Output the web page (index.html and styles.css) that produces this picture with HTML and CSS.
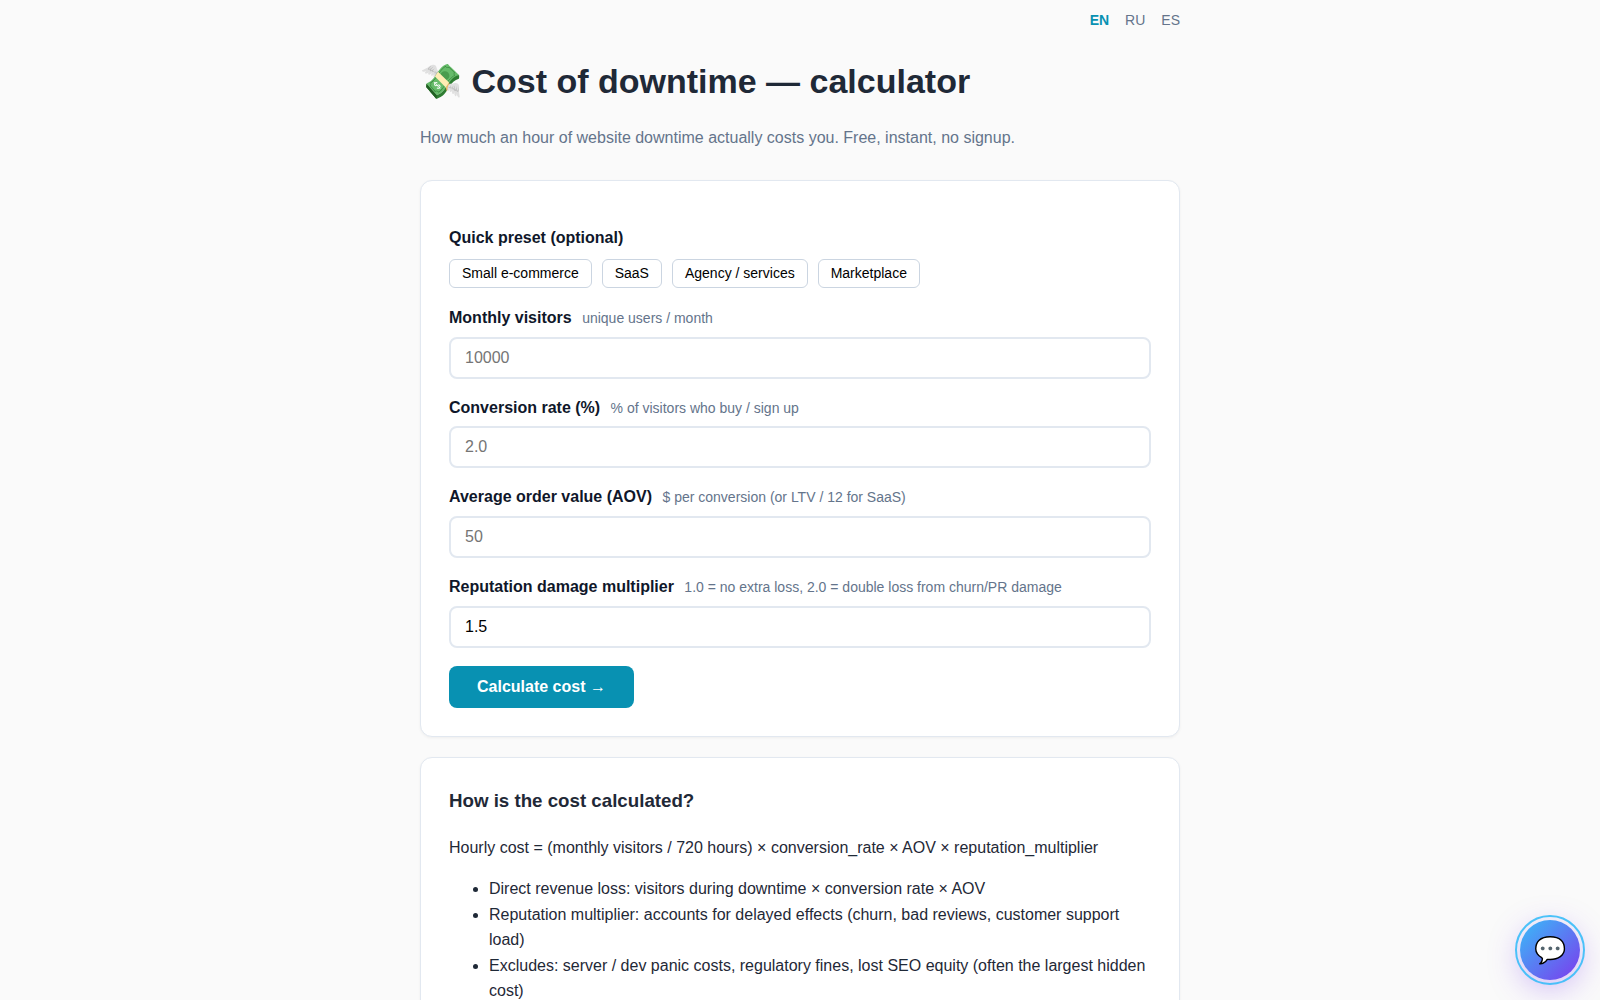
FILE: index.html
```
<!DOCTYPE html>
<html lang="en">
<head>
    <meta charset="UTF-8">
    <meta name="viewport" content="width=device-width, initial-scale=1.0">
    <title>Cost of downtime — calculator</title>
    <link rel="stylesheet" href="styles.css">
</head>
<body>
    <nav class="langs">
        <a href="#en" class="active">EN</a>
        <a href="#ru">RU</a>
        <a href="#es">ES</a>
    </nav>
    <h1>💸 Cost of downtime — calculator</h1>
    <p class="sub">How much an hour of website downtime actually costs you. Free, instant, no signup.</p>

    <form class="card">
        <div class="label" id="preset-label">Quick preset (optional)</div>
        <div class="presets" role="group" aria-labelledby="preset-label">
            <button type="button">Small e-commerce</button>
            <button type="button">SaaS</button>
            <button type="button">Agency / services</button>
            <button type="button">Marketplace</button>
        </div>

        <label class="label" for="visitors">Monthly visitors <span class="hint">unique users / month</span></label>
        <input type="number" id="visitors" placeholder="10000">

        <label class="label" for="conversion">Conversion rate (%) <span class="hint">% of visitors who buy / sign up</span></label>
        <input type="number" id="conversion" placeholder="2.0" step="0.1">

        <label class="label" for="aov">Average order value (AOV) <span class="hint">$ per conversion (or LTV / 12 for SaaS)</span></label>
        <input type="number" id="aov" placeholder="50">

        <label class="label" for="multiplier">Reputation damage multiplier <span class="hint">1.0 = no extra loss, 2.0 = double loss from churn/PR damage</span></label>
        <input type="number" id="multiplier" value="1.5" step="0.1">

        <button type="submit" class="submit">Calculate cost →</button>
    </form>

    <section class="card">
        <h3>How is the cost calculated?</h3>
        <p>Hourly cost = (monthly visitors / 720 hours) × conversion_rate × AOV × reputation_multiplier</p>
        <ul>
            <li>Direct revenue loss: visitors during downtime × conversion rate × AOV</li>
            <li>Reputation multiplier: accounts for delayed effects (churn, bad reviews, customer support load)</li>
            <li>Excludes: server / dev panic costs, regulatory fines, lost SEO equity (often the largest hidden cost)</li>
        </ul>
    </section>

    <button type="button" class="chat" aria-label="Open chat">💬</button>
</body>
</html>
```
FILE: styles.css
```
* {
    box-sizing: border-box;
}
body {
    font-family: "Liberation Sans", Arial, sans-serif;
    max-width: 800px;
    margin: 0 auto;
    padding: 8px 20px 40px;
    background: #fafafa;
    color: #1f2937;
    line-height: 1.6;
}
.langs {
    display: flex;
    justify-content: flex-end;
    gap: 16px;
    font-size: 14px;
    line-height: 24px;
}
.langs a {
    color: #64748b;
    text-decoration: none;
}
.langs .active {
    color: #0891b2;
    font-weight: bold;
}
h1 {
    margin: 24px 0 18px;
    font-size: 34px;
    line-height: 51px;
}
.sub {
    margin: 0 0 29px;
    color: #64748b;
}
.card {
    margin-bottom: 20px;
    padding: 28px;
    background: #fff;
    border: 1px solid #e2e8f0;
    border-radius: 12px;
    box-shadow: 0 1px 3px rgba(0, 0, 0, 0.05);
}
.label {
    display: block;
    margin: 16px 0 6px;
    color: #0f172a;
    font-weight: bold;
}
.hint {
    margin-left: 6px;
    color: #64748b;
    font-size: 14px;
    font-weight: normal;
}
.presets {
    display: flex;
    flex-wrap: wrap;
    gap: 10px;
    margin: 9px 0 17px;
}
.presets button {
    padding: 6px 12px;
    background: #fff;
    border: 1px solid #cbd5e1;
    border-radius: 6px;
    font-family: inherit;
    font-size: 14px;
    line-height: 15px;
    cursor: pointer;
}
input {
    width: 100%;
    padding: 10px 14px;
    border: 2px solid #e2e8f0;
    border-radius: 8px;
    font-family: inherit;
    font-size: 16px;
}
.submit {
    display: block;
    margin-top: 18px;
    padding: 12px 28px;
    background: #0891b2;
    color: #fff;
    border: none;
    border-radius: 8px;
    font-family: inherit;
    font-size: 16px;
    font-weight: bold;
    cursor: pointer;
}
h3 {
    margin: 0 0 19px;
}
p {
    margin: 16px 0;
}
ul {
    margin: 16px 0;
    padding-left: 40px;
}
.chat {
    position: fixed;
    right: 20px;
    bottom: 20px;
    width: 60px;
    height: 60px;
    padding: 0;
    border: none;
    border-radius: 50%;
    background: linear-gradient(135deg, #38bdf8, #7c3aed);
    box-shadow: 0 8px 32px rgba(124, 58, 237, 0.35);
    font-size: 26px;
    cursor: pointer;
}
/* ring around the chat button */
.chat::after {
    content: "";
    position: absolute;
    inset: -5px;
    border: 2px solid #38bdf8;
    border-radius: 50%;
    opacity: 0.9;
}
```
